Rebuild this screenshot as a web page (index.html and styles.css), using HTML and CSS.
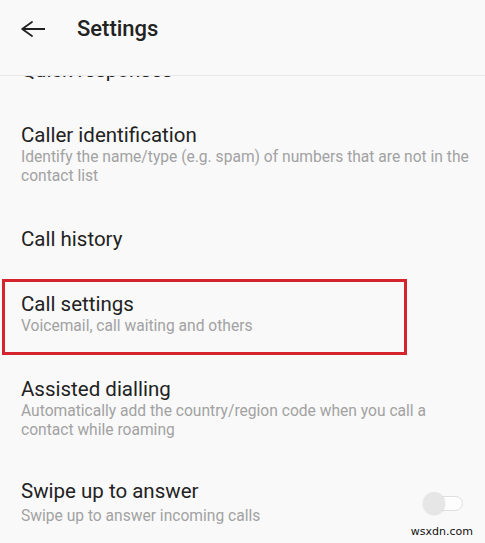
FILE: index.html
```html
<html lang="en">
<head>
  <meta charset="utf-8">
  <title>Settings</title>
  <link rel="stylesheet" href="styles.css">
</head>
<body>
<div class="screen">
  <div class="header">
    <svg class="back" width="24" height="24" viewBox="0 0 24 24">
      <path d="M1.2 12H24 M1.2 12L11 5 M1.2 12L11 19" fill="none" stroke="#222" stroke-width="1.8" stroke-linecap="round"/>
    </svg>
    <div class="title">Settings</div>
  </div>

  <div class="list">
    <div class="item first">
      <div class="item-title">Quick responses</div>
    </div>
    <div class="item">
      <div class="item-title">Caller identification</div>
      <div class="item-sub">Identify the name/type (e.g. spam) of numbers that are not in the contact list</div>
    </div>
    <div class="item">
      <div class="item-title">Call history</div>
    </div>
    <div class="item marked">
      <div class="item-title">Call settings</div>
      <div class="item-sub">Voicemail, call waiting and others</div>
    </div>
    <div class="item">
      <div class="item-title">Assisted dialling</div>
      <div class="item-sub">Automatically add the country/region code when you call a contact while roaming</div>
    </div>
    <div class="item row">
      <div class="text">
        <div class="item-title">Swipe up to answer</div>
        <div class="item-sub">Swipe up to answer incoming calls</div>
      </div>
      <div class="toggle"><span class="knob"></span></div>
    </div>
  </div>

  <div class="watermark">wsxdn.com</div>
</div>
</body>
</html>
```

FILE: styles.css
```css
body { margin: 0; background: #f9f9f9; font-family: Roboto, "Noto Sans", sans-serif; color: #222; }

.screen { position: relative; width: 485px; height: 543px; overflow: hidden; }

.header {
  height: 76px;
  box-sizing: border-box;
  padding: 17px 0 0 21px;
  border-bottom: 1px solid #e9e9e9;
  display: flex;
  align-items: flex-start;
}
.back { display: block; }
.title {
  margin-left: 32px;
  font-size: 22px;
  font-weight: 500;
  line-height: 24px;
  color: #222;
}

.list { height: 466px; overflow: hidden; }

.item { padding: 20px 10px 21px 21px; }
.item.first { margin-top: -38px; }

.item-title { font-size: 20.5px; line-height: 24px; color: #222; }
.item-sub { margin-top: 1px; font-size: 15.6px; line-height: 19px; color: #a2a2a2; }

.marked { position: relative; }
.marked::after {
  content: "";
  position: absolute;
  left: 2px;
  top: 7px;
  width: 405px;
  bottom: 2px;
  box-sizing: border-box;
  border: 3px solid #d4252f;
}

.row { display: flex; align-items: center; padding-top: 18px; padding-right: 22px; }
.row .text { flex: 1; }
.row .item-sub { margin-top: 4px; }

.toggle {
  position: relative;
  width: 38px;
  height: 15px;
  margin-top: 2px;
  box-sizing: border-box;
  border: 1px solid #dedede;
  border-radius: 8px;
  background: #fdfdfd;
}
.knob {
  position: absolute;
  left: -3px;
  top: -5px;
  width: 22px;
  height: 22px;
  border-radius: 50%;
  background: #e6e6e6;
  box-shadow: 0 1px 2px rgba(0, 0, 0, 0.12);
}

.watermark {
  position: absolute;
  right: 12px;
  bottom: 5px;
  font-family: "DejaVu Sans", sans-serif;
  font-size: 11px;
  color: #111;
}
```
